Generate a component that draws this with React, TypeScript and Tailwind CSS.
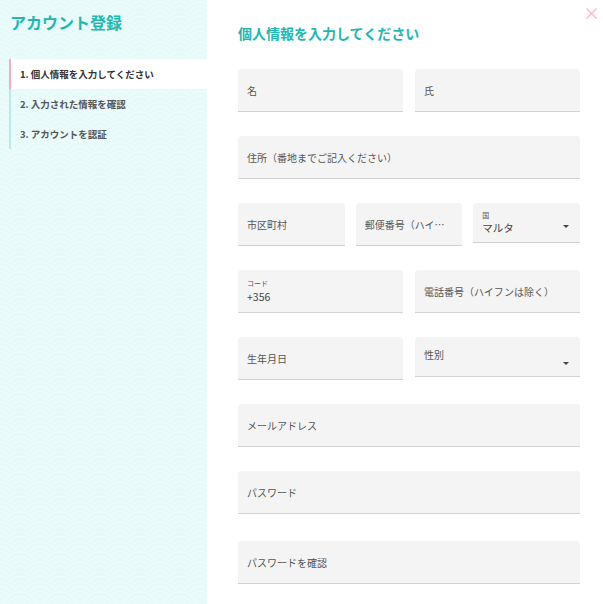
import type { ReactNode } from 'react'

const font = { fontFamily: '"Noto Sans CJK JP", "Noto Sans", sans-serif' }

function Seigaiha() {
  const rows: [number, number][] = [
    [0, 0], [40, 0], [20, 10], [0, 20], [40, 20], [20, 30],
  ]
  return (
    <svg className="absolute inset-0 w-full h-full" aria-hidden>
      <defs>
        <pattern id="wave" width="40" height="20" patternUnits="userSpaceOnUse">
          {rows.map(([cx, cy], i) => (
            <g key={i}>
              <circle cx={cx} cy={cy} r="20" fill="#e7fafa" />
              {[18, 13.5, 9, 4.5].map(r => (
                <circle key={r} cx={cx} cy={cy} r={r} fill="none" stroke="#eefcfc" strokeWidth="1.5" />
              ))}
            </g>
          ))}
        </pattern>
      </defs>
      <rect width="100%" height="100%" fill="url(#wave)" />
    </svg>
  )
}

function Field({ label, className = '' }: { label: string; className?: string }) {
  return (
    <div className={`min-w-0 basis-0 h-[43px] bg-[#f4f4f4] rounded-t border-b border-[#cfd3d3] flex items-center px-[9px] ${className}`}>
      <span className="text-[10px] text-[#555] whitespace-nowrap overflow-hidden text-ellipsis">{label}</span>
    </div>
  )
}

function Caret() {
  return <span className="absolute right-[11px] w-0 h-0 border-l-[3.5px] border-r-[3.5px] border-t-[3.5px] border-l-transparent border-r-transparent border-t-[#444]" />
}

function SelectField({ small, value, className = '' }: { small?: string; value: string; className?: string }) {
  return (
    <div className={`relative min-w-0 basis-0 h-[40px] bg-[#f4f4f4] rounded-t border-b border-[#cfd3d3] flex flex-col justify-center gap-[1px] px-[9px] ${className}`}>
      {small && <span className="text-[7px] leading-[9px] text-[#555]">{small}</span>}
      <span className="text-[10.5px] leading-[14px] text-[#444]">{value}</span>
      <span className="absolute right-0 top-[23px] flex items-center"><Caret /></span>
    </div>
  )
}

function Row({ children, className = 'mb-6' }: { children: ReactNode; className?: string }) {
  return <div className={`flex gap-[12px] ${className}`}>{children}</div>
}

export default function App() {
  const steps = ['1. 個人情報を入力してください', '2. 入力された情報を確認', '3. アカウントを認証']
  return (
    <div className="flex w-[603px] h-[604px] bg-white overflow-hidden" style={font}>
      {/* sidebar */}
      <aside className="relative w-[207px] h-full bg-[#e7fafa] shrink-0">
        <Seigaiha />
        <div className="relative">
          <h1 className="pl-[10px] pt-[11px] text-[16px] leading-[22px] font-bold text-[#1fb8b0]">アカウント登録</h1>
          <ul className="mt-[26px] ml-[9px]">
            {steps.map((s, i) => (
              <li
                key={s}
                className={`h-[30px] flex items-center pl-[9px] border-l-2 text-[9.5px] font-bold ${
                  i === 0 ? 'bg-white border-[#f7a9c6] text-[#333]' : 'border-[#b5ecea] text-[#555]'
                }`}
              >
                {s}
              </li>
            ))}
          </ul>
        </div>
      </aside>

      {/* form */}
      <main className="relative flex-1 pl-[31px] pr-[23px]">
        <svg className="absolute right-[6px] top-[8px]" width="11" height="11" viewBox="0 0 11 11">
          <path d="M0.5 0.5 L10.5 10.5 M10.5 0.5 L0.5 10.5" stroke="#f8b6cd" strokeWidth="1.3" />
        </svg>
        <h2 className="pt-[24px] text-[14px] leading-[18px] font-bold text-[#1fb8b0]">個人情報を入力してください</h2>
        <div className="mt-[27px]">
          <Row>
            <Field label="名" className="flex-1" />
            <Field label="氏" className="flex-1" />
          </Row>
          <Row>
            <Field label="住所（番地までご記入ください）" className="flex-1" />
          </Row>
          <Row className="mb-6 !gap-[11px]">
            <Field label="市区町村" className="flex-1" />
            <Field label="郵便番号（ハイフンは除く）" className="flex-1" />
            <SelectField small="国" value="マルタ" className="flex-1" />
          </Row>
          <Row>
            <div className="flex-1 min-w-0 basis-0 h-[43px] bg-[#f4f4f4] rounded-t border-b border-[#cfd3d3] flex flex-col justify-center gap-[1px] px-[9px]">
              <span className="text-[7px] leading-[9px] text-[#555]">コード</span>
              <span className="text-[10.5px] leading-[15px] text-[#444]">+356</span>
            </div>
            <Field label="電話番号（ハイフンは除く）" className="flex-1" />
          </Row>
          <Row>
            <Field label="生年月日" className="flex-1" />
            <div className="relative flex-1 min-w-0 basis-0 h-[40px] bg-[#f4f4f4] rounded-t border-b border-[#cfd3d3] flex items-center px-[9px]">
              <span className="text-[10px] text-[#555] -mt-[4px]">性別</span>
              <span className="absolute right-0 top-[26px] flex items-center"><Caret /></span>
            </div>
          </Row>
          <Row>
            <Field label="メールアドレス" className="flex-1" />
          </Row>
          <Row className="mb-[27px]">
            <Field label="パスワード" className="flex-1" />
          </Row>
          <Row className="">
            <Field label="パスワードを確認" className="flex-1" />
          </Row>
        </div>
      </main>
    </div>
  )
}
